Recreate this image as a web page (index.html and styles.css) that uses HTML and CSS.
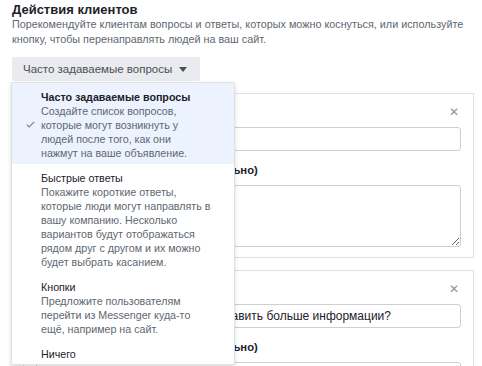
FILE: index.html
```html
<!DOCTYPE html>
<html lang="ru">
  <head>
    <meta charset="UTF-8" />
    <meta name="viewport" content="width=device-width, initial-scale=1.0" />
    <title>Действия клиентов</title>

    <link rel="stylesheet" href="styles.css">
  </head>
  <body>
    <div class="page">
      <h2 class="title">Действия клиентов</h2>
      <p class="subtitle">Порекомендуйте клиентам вопросы и ответы, которых можно коснуться, или используйте кнопку, чтобы перенаправлять людей на ваш сайт.</p>

      <div class="picker">
        <button class="picker-btn">Часто задаваемые вопросы <span class="caret"></span></button>

        <ul class="menu">
          <li class="menu-item selected">
            <svg class="check" width="9" height="7" viewBox="0 0 9 7">
              <path d="M0.8 3.6 L3.2 6 L8.2 0.8" fill="none" stroke="#7f838a" stroke-width="1.2" />
            </svg>
            <div class="item-title">Часто задаваемые вопросы</div>
            <div class="item-desc">Создайте список вопросов, которые могут возникнуть у людей после того, как они нажмут&nbsp;на ваше объявление.</div>
          </li>
          <li class="menu-item">
            <div class="item-title">Быстрые ответы</div>
            <div class="item-desc">Покажите короткие ответы, которые люди могут направлять в вашу компанию. Несколько вариантов будут отображаться рядом друг с другом и их можно будет выбрать касанием.</div>
          </li>
          <li class="menu-item">
            <div class="item-title">Кнопки</div>
            <div class="item-desc">Предложите пользователям перейти из Messenger куда-то ещё, например на сайт.</div>
          </li>
          <li class="menu-item last">
            <div class="item-title">Ничего</div>
          </li>
        </ul>
      </div>

      <div class="cards">
        <div class="card">
          <div class="card-head">
            <span class="card-title">Вопрос 1</span>
            <span class="close">&#x2715;</span>
          </div>
          <input class="field" type="text" value="">
          <div class="label">Автоматический ответ (необязательно)</div>
          <textarea class="area"></textarea>
        </div>

        <div class="card">
          <div class="card-head">
            <span class="card-title">Вопрос 2</span>
            <span class="close">&#x2715;</span>
          </div>
          <input class="field" type="text" value="Могли бы вы пожалуйста предоставить больше информации?">
          <div class="label">Автоматический ответ (необязательно)</div>
          <textarea class="area"></textarea>
        </div>
      </div>
    </div>
  </body>
</html>
```

FILE: styles.css
```css
html,
body {
  margin: 0;
  overflow: hidden;
  background: #fff;
  font-family: "Liberation Sans", Arial, sans-serif;
  font-size: 12px;
  color: #1d2129;
}

.page {
  padding: 3px 8px 0 12px;
}

.title {
  margin: 0;
  font-size: 13px;
  line-height: 14px;
  font-weight: bold;
  color: #1d2129;
}

.subtitle {
  margin: 0;
  font-size: 10.8px;
  line-height: 15px;
  color: #606770;
}

.picker {
  position: relative;
  margin-top: 10px;
  z-index: 2;
}

.picker-btn {
  display: inline-flex;
  align-items: center;
  height: 24px;
  padding: 0 13px 0 11px;
  border: none;
  border-radius: 2px;
  background: #e9ebee;
  color: #4b4f56;
  font-family: inherit;
  font-size: 11.5px;
}

.caret {
  margin-left: 7px;
  width: 0;
  height: 0;
  border-left: 4px solid transparent;
  border-right: 4px solid transparent;
  border-top: 5px solid #4b4f56;
}

.menu {
  position: absolute;
  top: 100%;
  left: -1px;
  width: 222px;
  margin: 1px 0 0;
  padding: 0;
  list-style: none;
  background: #fff;
  border: 1px solid rgba(0, 0, 0, 0.12);
  border-radius: 2px;
  box-shadow: 0 2px 4px rgba(0, 0, 0, 0.15);
  font-size: 10.7px;
}

.menu-item {
  position: relative;
  padding: 7px 21px 4px 29px;
  line-height: 14px;
}

.menu-item.last {
  padding-bottom: 3px;
}

.menu-item.selected {
  background: #ecf3ff;
}

.check {
  position: absolute;
  left: 14px;
  top: 50%;
  margin-top: -3px;
}

.item-title {
  color: #1d2129;
}

.selected .item-title {
  font-weight: bold;
}

.item-desc {
  color: #606770;
}

.cards {
  margin: 12px 0 0 11px;
}

.card {
  border: 1px solid #dddfe2;
  padding: 11px 12px 10px;
  margin-bottom: 12px;
}

.card-head {
  display: flex;
  justify-content: space-between;
  line-height: 14px;
}

.card-title {
  font-weight: bold;
}

.close {
  color: #90949c;
  font-size: 12px;
  padding-right: 2px;
}

.field {
  display: block;
  box-sizing: border-box;
  width: 100%;
  height: 24px;
  margin-top: 8px;
  padding: 0 6px;
  border: 1px solid #ccd0d5;
  border-radius: 3px;
  font-family: inherit;
  font-size: 12px;
  color: #1d2129;
}

.label {
  margin-top: 12px;
  line-height: 14px;
  font-size: 11.3px;
  font-weight: bold;
}

.area {
  display: block;
  box-sizing: border-box;
  width: 100%;
  height: 62px;
  margin-top: 8px;
  border: 1px solid #ccd0d5;
  border-radius: 3px;
  font-family: inherit;
}
```
